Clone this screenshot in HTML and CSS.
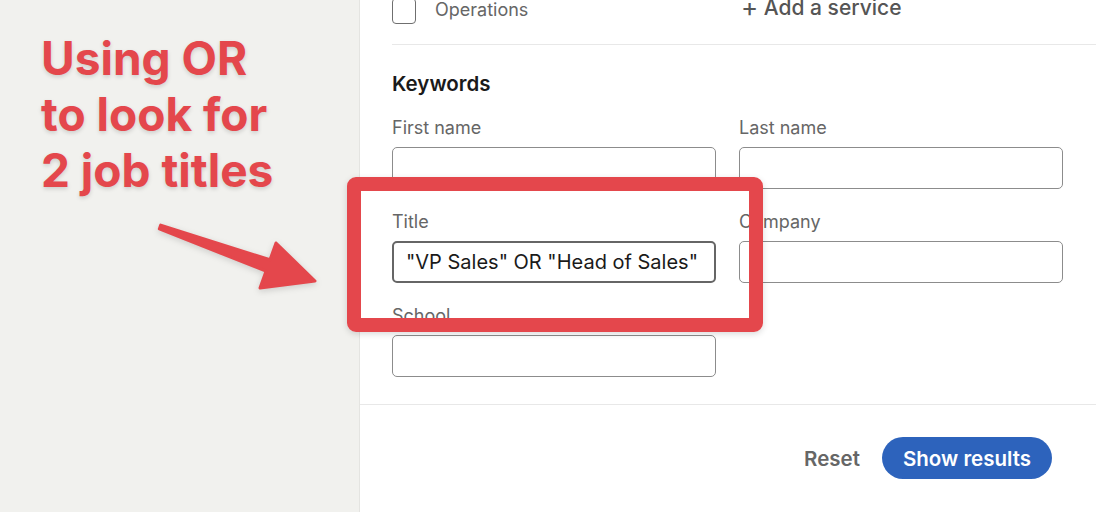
FILE: index.html
```html
<!DOCTYPE html>
<html lang="en">
<head>
<meta charset="utf-8">
<title>Keywords filter</title>
<link rel="stylesheet" href="styles.css">
</head>
<body>
<div class="page">
  <aside class="note">
    <p class="note-text">Using OR<br>to look for<br>2 job titles</p>
    <svg class="arrow" width="360" height="512" viewBox="0 0 360 512" aria-hidden="true">
      <polygon points="160.7,225.1 270,259.8 276,243 315,281 260,288 266,271.2 159.3,228.9" fill="#e4474c" stroke="#e4474c" stroke-width="3" stroke-linejoin="round"/>
    </svg>
  </aside>
  <main class="panel">
    <section class="services">
      <div class="grid">
        <label class="check"><span class="box"></span><span class="check-label">Operations</span></label>
        <div class="add"><span class="plus">+</span> Add a service</div>
      </div>
    </section>
    <section class="keywords">
      <h2 class="heading">Keywords</h2>
      <div class="grid fields">
        <div class="field"><label class="label">First name</label><input class="input" type="text"></div>
        <div class="field"><label class="label">Last name</label><input class="input" type="text"></div>
        <div class="field"><label class="label">Title</label><input class="input input-focus" type="text" value="&quot;VP Sales&quot; OR &quot;Head of Sales&quot;"></div>
        <div class="field"><label class="label">Company</label><input class="input" type="text"></div>
        <div class="field"><label class="label">School</label><input class="input" type="text"></div>
      </div>
    </section>
    <footer class="actions">
      <span class="reset">Reset</span>
      <span class="show">Show results</span>
    </footer>
  </main>
  <div class="highlight"></div>
</div>
</body>
</html>
```

FILE: styles.css
```css
* { box-sizing: border-box; }
html, body { margin: 0; padding: 0; }
body {
  width: 1096px;
  height: 512px;
  overflow: hidden;
  font-family: Inter, "Noto Sans", sans-serif;
  background: #ffffff;
}
.page {
  position: relative;
  display: flex;
  height: 512px;
}
.note {
  position: relative;
  width: 360px;
  flex: none;
  background: #f1f1ee;
  border-right: 1px solid #e4e4e1;
  padding: 30px 0 0 41px;
}
.note-text {
  margin: 0;
  font-size: 46px;
  line-height: 56px;
  font-weight: 700;
  color: #e4474c;
  letter-spacing: 0;
  text-shadow: 0 2px 4px rgba(0,0,0,0.15);
}
.arrow {
  position: absolute;
  left: 0;
  top: 0;
  filter: drop-shadow(0 2px 3px rgba(0,0,0,0.15));
}
.panel {
  flex: 1;
  display: flex;
  flex-direction: column;
  background: #ffffff;
}
.grid {
  display: grid;
  grid-template-columns: 324px 324px;
  column-gap: 23px;
}
.services {
  margin: -2px 0 0 32px;
  padding: 0 33px 20px 0;
  border-bottom: 1px solid #e8e8e8;
}
.check {
  display: flex;
  align-items: center;
  gap: 19px;
}
.box {
  width: 24px;
  height: 26px;
  border: 1px solid #6f6f6f;
  border-radius: 4px;
  flex: none;
}
.check-label {
  font-size: 18px;
  color: #666666;
  margin-top: -4px;
}
.add {
  font-size: 21px;
  line-height: 22px;
  font-weight: 500;
  color: #555555;
  padding-left: 2px;
  margin-top: -2px;
}
.plus {
  font-size: 26px;
  font-weight: 400;
  vertical-align: -1px;
}
.keywords {
  padding: 26px 33px 27px 32px;
  border-bottom: 1px solid #e8e8e8;
}
.heading {
  margin: 0;
  font-size: 20.5px;
  line-height: 25px;
  font-weight: 600;
  color: #1a1a1a;
}
.fields {
  margin-top: 21px;
  row-gap: 22px;
}
.field {
  display: flex;
  flex-direction: column;
}
.label {
  font-size: 18px;
  line-height: 22px;
  color: #666666;
  margin-bottom: 8px;
}
.input {
  width: 324px;
  height: 42px;
  border: 1px solid #8c8c8c;
  border-radius: 5px;
  background: #ffffff;
  font-family: Inter, "Noto Sans", sans-serif;
  font-size: 20px;
  color: #1a1a1a;
  padding: 0 12px;
  outline: none;
}
.input-focus {
  border: 2px solid #666666;
}
.actions {
  display: flex;
  justify-content: flex-end;
  align-items: center;
  gap: 22px;
  padding: 32px 44px 0 0;
}
.reset {
  font-size: 20.5px;
  font-weight: 600;
  color: #666666;
}
.show {
  display: flex;
  align-items: center;
  height: 42px;
  padding: 0 21px;
  border-radius: 21px;
  background: #2d63bc;
  color: #ffffff;
  font-size: 20.5px;
  font-weight: 600;
}
.highlight {
  position: absolute;
  left: 347px;
  top: 177px;
  width: 416px;
  height: 155px;
  border: 14px solid #e4474c;
  border-radius: 9px;
  box-shadow: 0 2px 6px rgba(0,0,0,0.15);
}
```
